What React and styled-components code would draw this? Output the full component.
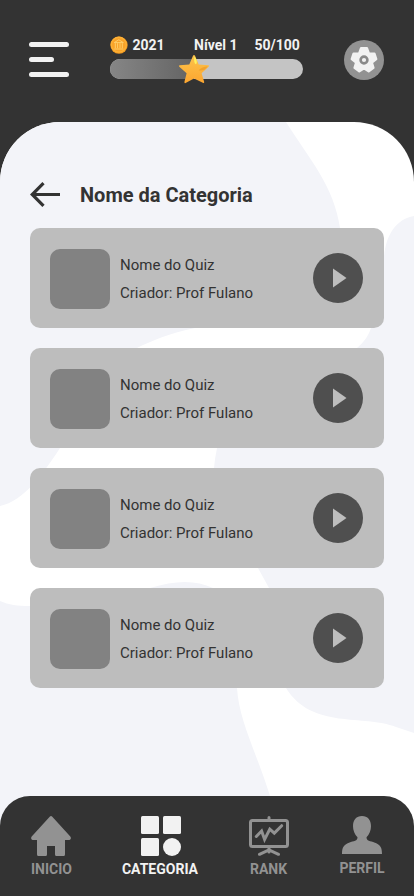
import React from 'react';
import styled, { createGlobalStyle } from 'styled-components';

const GlobalStyle = createGlobalStyle`
  * { box-sizing: border-box; }
  body { margin: 0; background: #333333; font-family: Roboto, "Liberation Sans", sans-serif; }
  button { border: 0; padding: 0; background: none; font: inherit; display: block; }
  svg { display: block; }
`;

const Screen = styled.div`
  width: 414px;
  height: 896px;
  display: flex;
  flex-direction: column;
  overflow: hidden;
  background: #333333;
`;

const Header = styled.header`
  height: 122px;
  flex: none;
  display: flex;
  align-items: flex-start;
  padding: 0 30px 0 29px;
`;

const MenuButton = styled.button`
  width: 40px;
  margin: 42px 41px 0 0;
  display: flex;
  flex-direction: column;
  gap: 10px;
`;

const MenuLine = styled.span`
  width: ${(p) => p.$width}px;
  height: 5px;
  border-radius: 3px;
  background: #f2f2f2;
`;

const Progress = styled.div`
  width: 193px;
  padding-top: 36px;
`;

const Stats = styled.div`
  height: 18px;
  display: flex;
  align-items: center;
  color: #f2f2f2;
  font-size: 14px;
  font-weight: 700;
  line-height: 18px;
  white-space: nowrap;
`;

const Coins = styled.span`
  display: flex;
  align-items: center;
  gap: 4.4px;
  width: 84px;
`;

const Level = styled.span`
  width: 60.4px;
`;

const Track = styled.div`
  position: relative;
  height: 20px;
  margin-top: 5px;
  border-radius: 10px;
  background: #c4c4c4;
  overflow: visible;
`;

const Fill = styled.div`
  width: 84px;
  height: 20px;
  border-radius: 10px 0 0 10px;
  background: linear-gradient(90deg, #868686, #636363);
`;

const StarMark = styled.svg`
  position: absolute;
  left: 68px;
  top: -5px;
`;

const SettingsButton = styled.button`
  margin: 40px 0 0 auto;
`;

const Sheet = styled.main`
  position: relative;
  height: 674px;
  flex: none;
  padding: 0 30px;
`;

const Backdrop = styled.svg`
  position: absolute;
  left: 0;
  top: 0;
  border-radius: 60px 60px 0 0;
`;

const Content = styled.div`
  position: relative;
`;

const TitleRow = styled.div`
  height: 106px;
  padding-top: 59px;
  display: flex;
  align-items: flex-start;
  gap: 20px;
`;

const BackButton = styled.button`
  margin-top: 1px;
`;

const Title = styled.h1`
  margin: 0;
  color: #333333;
  font-size: 20px;
  font-weight: 700;
  line-height: 28px;
`;

const QuizList = styled.div`
  display: flex;
  flex-direction: column;
  gap: 20px;
`;

const QuizCard = styled.article`
  height: 100px;
  padding: 0 21px 0 20px;
  display: flex;
  align-items: center;
  border-radius: 10px;
  background: #bdbdbd;
`;

const Thumbnail = styled.div`
  width: 60px;
  height: 60px;
  margin: 2px 10px 0 0;
  border-radius: 10px;
  background: #828282;
`;

const QuizText = styled.div`
  flex: 1;
  margin-top: 2px;
  color: #333333;
  font-size: 15px;
  line-height: 28px;
`;

const PlayButton = styled.button`
  width: 50px;
  height: 50px;
`;

const Nav = styled.nav`
  position: relative;
  height: 100px;
  flex: none;
  padding-top: 20px;
  display: grid;
  grid-template-columns: 102px 117px 100px 86px;
  border-radius: 30px 30px 0 0;
  background: #333333;
`;

const NavItem = styled.a`
  display: flex;
  flex-direction: column;
  align-items: center;
  gap: ${(p) => p.$gap || 5}px;
  color: ${(p) => (p.$active ? '#f2f2f2' : '#929292')};
  font-size: 14px;
  font-weight: 700;
  line-height: 17px;
`;

const NavLabel = styled.span`
  transform: translateX(${(p) => p.$shift || 0}px);
`;

function Coin() {
  return (
    <svg width="18" height="18" viewBox="0 0 18 18">
      <circle cx="9" cy="9.1" r="8.7" fill="#f39a20" />
      <circle cx="8.8" cy="8.7" r="8.1" fill="#fdb136" />
      <circle cx="8.8" cy="8.7" r="6.8" fill="#f9a329" />
      <path d="M4.2 6.6 8.8 3.8l4.6 2.8zM5.3 7.2v5M7.6 7.2v5M10 7.2v5M12.3 7.2v5M4.2 13h9.2" fill="none" stroke="#ffd270" strokeWidth=".9" />
    </svg>
  );
}

function Star() {
  return (
    <StarMark width="32" height="30" viewBox="0 0 32 30">
      <defs>
        <linearGradient id="star" x1="0" y1="0" x2="0" y2="1">
          <stop offset="0" stopColor="#fcc44b" />
          <stop offset="1" stopColor="#fba530" />
        </linearGradient>
      </defs>
      <path d="M15 1.7Q16 .4 17 1.7L20.7 10.5 30.3 11.2Q31.6 11.5 30.8 12.6L23.6 19.2 26.2 28Q26.2 29.6 24.8 28.8L16 24.6 7.6 29Q6.3 29.6 6.4 28L8.6 19.2 1.3 12.8Q.2 11.6 1.8 11.2L11.3 10.4Z" fill="url(#star)" />
      <path d="M16.4 2.6c2.2 2.5 3.2 6.2 1.7 7.5-1.7.6-2.3-4-1.7-7.5z" fill="#fff35d" />
      <path d="M20.7 16.2c2.2-2.4 6-4 9-3.8-1.8 2.8-5.5 5-9 3.8z" fill="#ef9b27" opacity=".75" />
    </StarMark>
  );
}

function Gear() {
  return (
    <svg width="40" height="40" viewBox="0 0 40 40">
      <circle cx="20" cy="20" r="20" fill="#929292" />
      <path
        transform="translate(20 20)"
        d="M-2.9-11.9H2.9L4.8-6.6 10.4-6.4 12.2-.9 7.8 2.5 9.4 7.9 4.7 11.3 0 8.2-4.7 11.3-9.4 7.9-7.8 2.5-12.2-.9-10.4-6.4-4.8-6.6Z"
        fill="#f2f2f2"
        stroke="#f2f2f2"
        strokeWidth="2.4"
        strokeLinejoin="round"
      />
      <circle cx="20" cy="20" r="3.4" fill="none" stroke="#8a8a8a" strokeWidth="2.6" />
    </svg>
  );
}

function Shapes() {
  return (
    <Backdrop width="414" height="712" viewBox="0 122 414 712">
      <rect y="122" width="414" height="712" fill="#fff" />
      <g fill="#f3f4f9">
        <path d="M0 122H286C310 160 334 186 340 228C350 275 330 304 270 316C235 322 219 324 195 328C170 333 151 341 137 348C97 368 82 414 60 448C43 474 24 501 0 506Z" />
        <path d="M414 216C396 219 386 235 384 256C381 283 380 307 371 328C368 337 363 343 357 348C325 376 226 382 217 448Q215 457 214 468C214 510 237 540 258 568L269 588C282 624 265 654 286 688C312 730 364 714 396 727Q405 730 414 733Z" />
        <path d="M0 601C9 605 17 606 30 606C78 604 111 599 150 588C176 580 196 580 213 588C249 605 233 653 237 688C239 721 256 751 270 796L283 834H0Z" />
      </g>
    </Backdrop>
  );
}

function Play() {
  return (
    <svg width="50" height="50" viewBox="0 0 50 50">
      <circle cx="25" cy="25" r="25" fill="#4f4f4f" />
      <path d="M20 15.5V34.5L33.5 25Z" fill="#bdbdbd" />
    </svg>
  );
}

function HomeIcon() {
  return (
    <svg width="40" height="40" viewBox="0 0 40 40" fill="currentColor">
      <path d="M18.7.7Q20-.5 21.3.7L39.3 20.6Q40.8 22.8 38.5 24H34V38.5Q34 40 32.5 40H25.5Q24 40 24 38.5V30H16V38.5Q16 40 14.5 40H7.5Q6 40 6 38.5V24H1.5Q-.8 22.8.7 20.6Z" />
    </svg>
  );
}

function CategoryIcon() {
  return (
    <svg width="40" height="40" viewBox="0 0 40 40" fill="currentColor">
      <rect width="18" height="18" rx="1.5" />
      <rect x="22" width="18" height="18" rx="1.5" />
      <rect y="22" width="18" height="18" rx="1.5" />
      <circle cx="31" cy="31" r="9" />
    </svg>
  );
}

function RankIcon() {
  return (
    <svg width="40" height="40" viewBox="0 0 40 40" fill="none" stroke="currentColor" strokeWidth="3">
      <rect x="1.5" y="4.5" width="37" height="26" rx="2" />
      <path d="M20 4V1.5M20 31v5M10.5 38.3 20 33.8 29.5 38.3" strokeLinecap="round" />
      <path d="M7.3 20.5 12.6 15 15.6 23.4 20.8 13.1 25.3 17.1 32.7 9.7" strokeLinecap="round" />
    </svg>
  );
}

function ProfileIcon() {
  return (
    <svg width="40" height="38" viewBox="0 0 40 38" fill="currentColor">
      <path d="M20 0C25.7 0 29 4.1 29 10.2C29 14.3 27.3 18.4 24.5 21.2C24.5 25 28 24.7 33 26.7C38.3 28.8 40 31.2 40 38H0C0 31.2 1.7 28.8 7 26.7C12 24.7 15.5 25 15.5 21.2C12.7 18.4 11 14.3 11 10.2C11 4.1 14.3 0 20 0Z" />
    </svg>
  );
}

export default function App() {
  return (
    <Screen>
      <GlobalStyle />
      <Header>
        <MenuButton aria-label="Menu">
          <MenuLine $width={40} />
          <MenuLine $width={25} />
          <MenuLine $width={40} />
        </MenuButton>
        <Progress>
          <Stats>
            <Coins><Coin />2021</Coins>
            <Level>Nível 1</Level>
            <span>50/100</span>
          </Stats>
          <Track><Fill /><Star /></Track>
        </Progress>
        <SettingsButton aria-label="Configurações"><Gear /></SettingsButton>
      </Header>
      <Sheet>
        <Shapes />
        <Content>
          <TitleRow>
            <BackButton aria-label="Voltar">
              <svg width="30" height="25" viewBox="0 0 30 25" fill="none" stroke="#333" strokeWidth="3.2">
                <path d="M30 12.5H2M13.5 1.2 2.2 12.5 13.5 23.8" />
              </svg>
            </BackButton>
            <Title>Nome da Categoria</Title>
          </TitleRow>
          <QuizList>
            {[1, 2, 3, 4].map((id) => (
              <QuizCard key={id}>
                <Thumbnail />
                <QuizText>
                  <div>Nome do Quiz</div>
                  <div>Criador: Prof Fulano</div>
                </QuizText>
                <PlayButton aria-label="Jogar"><Play /></PlayButton>
              </QuizCard>
            ))}
          </QuizList>
        </Content>
      </Sheet>
      <Nav>
        <NavItem><HomeIcon /><NavLabel $shift={0.5}>INICIO</NavLabel></NavItem>
        <NavItem $active><CategoryIcon /><NavLabel $shift={-0.5}>CATEGORIA</NavLabel></NavItem>
        <NavItem><RankIcon /><NavLabel $shift={-0.5}>RANK</NavLabel></NavItem>
        <NavItem $gap={6}><ProfileIcon /><NavLabel>PERFIL</NavLabel></NavItem>
      </Nav>
    </Screen>
  );
}
